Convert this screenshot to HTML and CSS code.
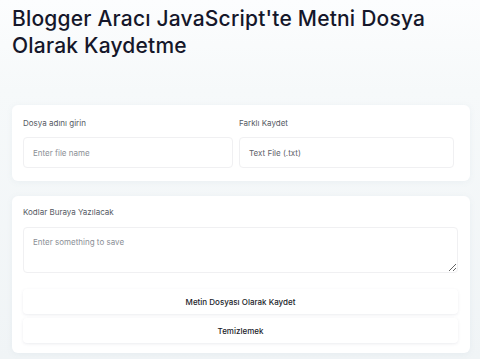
FILE: index.html
```html
<!DOCTYPE html>
<html lang="tr">
<head>
    <meta charset="UTF-8">
    <meta name="viewport" content="width=device-width, initial-scale=1.0">
    <title>Blogger Aracı</title>
    <link rel="stylesheet" href="styles.css">
</head>
<body>
    <div class="page">
        <h1 class="title">Blogger Aracı JavaScript'te Metni Dosya Olarak Kaydetme</h1>

        <div class="card cardTop">
            <div class="field">
                <label class="label">Dosya adını girin</label>
                <input class="input" type="text" placeholder="Enter file name">
            </div>
            <div class="field">
                <label class="label">Farklı Kaydet</label>
                <div class="input select">Text File (.txt)</div>
            </div>
        </div>

        <div class="card cardBottom">
            <label class="label">Kodlar Buraya Yazılacak</label>
            <textarea class="textArea" placeholder="Enter something to save"></textarea>
            <div class="btns">
                <button class="btn">Metin Dosyası Olarak Kaydet</button>
                <button class="btn">Temizlemek</button>
            </div>
        </div>
    </div>
</body>
</html>
```

FILE: styles.css
```css
body{
    margin: 0px;
    background: linear-gradient(#fcfdfe 0px, #f6f9fa 90px, #f0f4f6 359px);
    font-family: Inter, "Noto Sans", sans-serif;
    color: #1b1d2a;
    height: 359px;
    overflow: hidden;
}
.page{
    padding: 0 10px 0 12px;
}
.title{
    margin: 5px 0 0;
    font-size: 21px;
    line-height: 27px;
    font-weight: 500;
    color: #15172a;
    letter-spacing: 0.2px;
}
.card{
    background-color: #fff;
    border-radius: 6px;
    box-shadow: 0 1px 6px rgba(120, 140, 160, 0.08);
}
.cardTop{
    margin-top: 46px;
    display: grid;
    grid-template-columns: 210px 215px;
    column-gap: 6px;
    padding: 13px 16px 13px 11px;
}
.label{
    display: block;
    font-size: 8px;
    line-height: 10px;
    color: #555a63;
}
.field .label{
    margin-bottom: 9px;
}
.input{
    box-sizing: border-box;
    width: 100%;
    height: 31px;
    border: 1px solid #f0f0f2;
    border-radius: 4px;
    padding: 0 9px;
    font-family: inherit;
    font-size: 8px;
    color: #555;
    background: #fff;
    outline: none;
}
.input::placeholder{
    color: #8b8f96;
}
.select{
    display: flex;
    align-items: center;
    color: #5f636a;
}
.cardBottom{
    margin-top: 15px;
    padding: 11px 12px 10px 11px;
}
.cardBottom .label{
    margin-bottom: 10px;
}
.textArea{
    display: block;
    box-sizing: border-box;
    width: 100%;
    height: 46px;
    border: 1px solid #f0f0f2;
    border-radius: 4px;
    padding: 9px 9px;
    font-family: inherit;
    font-size: 8px;
    outline: none;
    resize: vertical;
}
.textArea::placeholder{
    color: #8b8f96;
}
.btns{
    margin-top: 16px;
    display: flex;
    flex-direction: column;
    gap: 4px;
}
.btn{
    height: 25px;
    border: none;
    border-radius: 4px;
    background-color: #fff;
    box-shadow: 0 1px 3px rgba(100, 110, 130, 0.12);
    font-family: inherit;
    font-size: 8px;
    font-weight: 500;
    color: #1b1d2a;
    cursor: pointer;
}
```
